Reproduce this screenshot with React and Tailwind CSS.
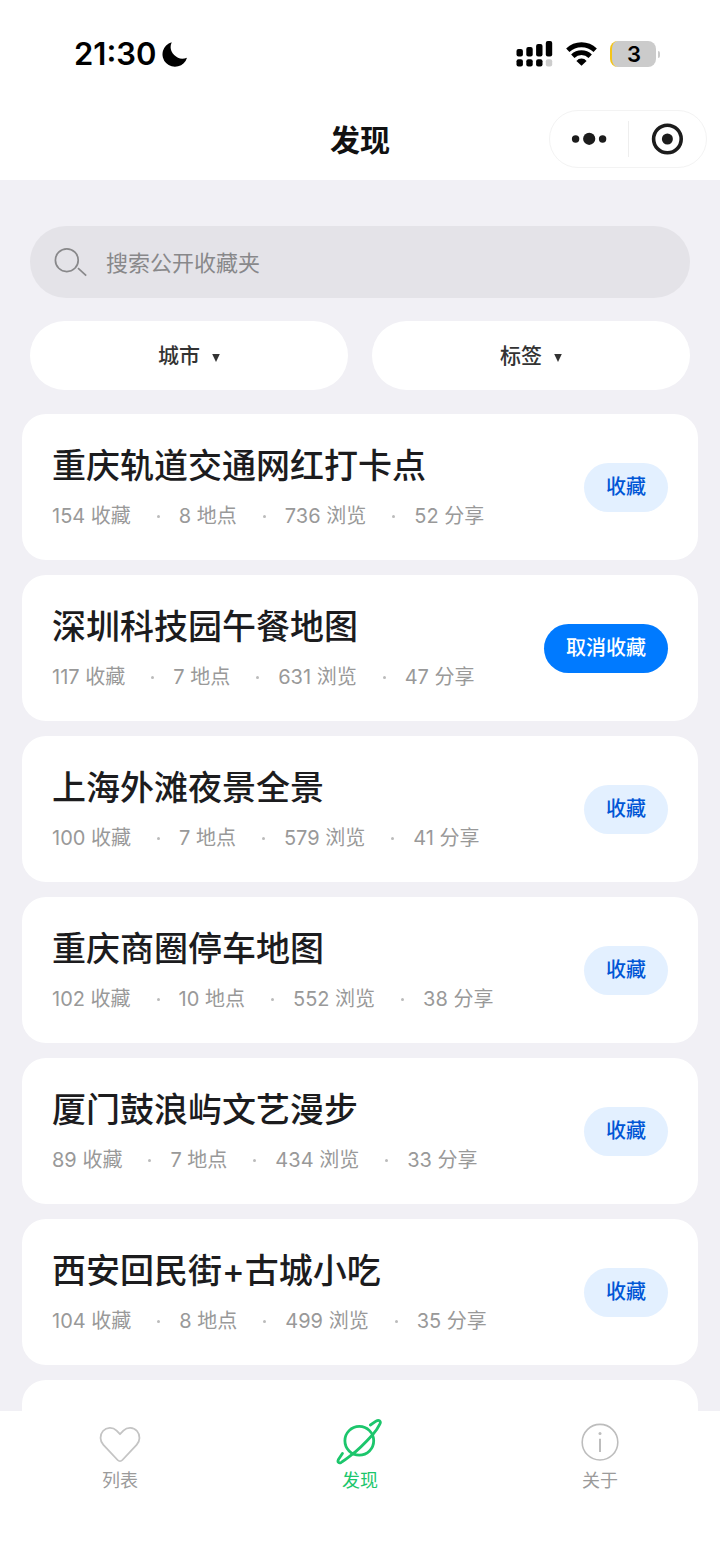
import { useState } from 'react'

const COLLECTIONS = [
  { id: 1, title: '重庆轨道交通网红打卡点', saves: 154, places: 8, views: 736, shares: 52 },
  { id: 2, title: '深圳科技园午餐地图', saves: 117, places: 7, views: 631, shares: 47 },
  { id: 3, title: '上海外滩夜景全景', saves: 100, places: 7, views: 579, shares: 41 },
  { id: 4, title: '重庆商圈停车地图', saves: 102, places: 10, views: 552, shares: 38 },
  { id: 5, title: '厦门鼓浪屿文艺漫步', saves: 89, places: 7, views: 434, shares: 33 },
  { id: 6, title: '西安回民街+古城小吃', saves: 104, places: 8, views: 499, shares: 35 },
]

export default function App() {
  const [saved, setSaved] = useState([2])

  const toggle = (id) => {
    setSaved(s => (s.includes(id) ? s.filter(x => x !== id) : [...s, id]))
  }

  return (
    <div className="h-dvh flex flex-col bg-[#f1f0f5] font-[Inter,'Noto_Sans_CJK_SC',sans-serif]">
      <header className="bg-white shrink-0">
        <StatusBar />
        <TitleBar title="发现" />
      </header>

      <main className="flex-1 min-h-0 overflow-hidden px-[22px] pt-[46px]">
        <div className="px-2">
          <label className="flex items-center h-[72px] px-6 gap-[19px] rounded-full bg-[#e4e3e8]">
            <SearchIcon />
            <input
              type="search"
              aria-label="搜索公开收藏夹"
              placeholder="搜索公开收藏夹"
              className="flex-1 min-w-0 pt-0.5 bg-transparent outline-none text-[22px] text-[#333333] placeholder:text-[#88888a]"
            />
          </label>
          <div className="grid grid-cols-2 gap-6 mt-[23px]">
            <Filter label="城市" />
            <Filter label="标签" />
          </div>
        </div>

        <ul className="flex flex-col gap-[15px] mt-6">
          {COLLECTIONS.map(c => (
            <CollectionCard key={c.id} item={c} saved={saved.includes(c.id)} onToggle={() => toggle(c.id)} />
          ))}
          <li className="h-[146px] shrink-0 rounded-3xl bg-white" />
        </ul>
      </main>

      <TabBar />
    </div>
  )
}

function StatusBar() {
  return (
    <div className="flex items-center justify-between h-[100px] pt-2 pl-[74px] pr-[60px] text-black">
      <div className="flex items-center gap-1.5">
        <span className="text-[31px] font-semibold">21:30</span>
        <svg width="25" height="25" viewBox="0 0 25 25" fill="currentColor">
          <path d="M9.7 0.2A12.5 12.5 0 1 0 25 15.7A11.8 11.8 0 0 1 9.7 0.2Z" />
        </svg>
      </div>
      <div className="flex items-center gap-[13px]">
        <svg width="37" height="26" viewBox="0 0 37 26" fill="currentColor">
          <rect x="0.5" y="8" width="6.4" height="7.4" rx="2" />
          <rect x="10.3" y="6" width="6.4" height="9.4" rx="2" />
          <rect x="20.1" y="3" width="6.4" height="12.4" rx="2" />
          <rect x="29.8" y="0" width="6.4" height="15.4" rx="2" />
          <rect x="0.5" y="18.2" width="6.4" height="7.2" rx="2" />
          <rect x="10.3" y="18.2" width="6.4" height="7.2" rx="2" />
          <rect x="20.1" y="18.2" width="6.4" height="7.2" rx="2" />
          <rect x="29.8" y="18.2" width="6.4" height="7.2" rx="2" fill="#cccccc" />
        </svg>
        <svg width="31" height="24" viewBox="0 0 31 24" fill="none" stroke="currentColor" strokeWidth="4.8">
          <path d="M1.8 8.2A20 20 0 0 1 29.2 8.2" />
          <path d="M6.8 14.2A12.6 12.6 0 0 1 24.2 14.2" />
          <path d="M15.5 23.8L10.4 18.9A6.8 6.8 0 0 1 20.6 18.9Z" fill="currentColor" stroke="none" />
        </svg>
        <div className="flex items-center gap-0.5">
          <div className="flex items-center justify-center w-[46px] h-[26px] rounded-lg border-l-2 border-[#f5c518] bg-[#cbcbcb] text-[22px] font-semibold leading-none">
            3
          </div>
          <div className="w-0.5 h-[7px] rounded-r-full bg-[#cbcbcb]" />
        </div>
      </div>
    </div>
  )
}

function TitleBar({ title }) {
  return (
    <div className="grid grid-cols-[1fr_auto_1fr] items-center h-20 px-[13px]">
      <h1 className="col-start-2 text-[30px] font-semibold text-[#111111]">{title}</h1>
      <div className="justify-self-end flex items-center w-[158px] h-[58px] mb-0.5 rounded-full border border-[#f3f3f3] text-[#1c1c1c]">
        <button aria-label="更多" className="flex-1 flex justify-center">
          <svg width="36" height="14" viewBox="0 0 36 14" fill="currentColor">
            <circle cx="4.6" cy="7" r="3.7" />
            <circle cx="18.2" cy="6.8" r="6.1" />
            <circle cx="31.6" cy="7" r="3.7" />
          </svg>
        </button>
        <div className="w-px h-9 bg-[#eeeeee]" />
        <button aria-label="关闭" className="flex-1 flex justify-center">
          <svg width="32" height="32" viewBox="0 0 32 32" fill="none" stroke="currentColor" strokeWidth="3.6">
            <circle cx="16.4" cy="16" r="13.8" />
            <circle cx="16.4" cy="16" r="5.5" fill="currentColor" stroke="none" />
          </svg>
        </button>
      </div>
    </div>
  )
}

function SearchIcon() {
  return (
    <svg width="33" height="30" viewBox="0 0 33 30" fill="none" stroke="#88888a" strokeWidth="1.7" className="shrink-0">
      <circle cx="12.8" cy="13.2" r="11.4" />
      <path d="M24 21.2L32.2 28.6" />
    </svg>
  )
}

function Filter({ label }) {
  return (
    <label className="flex items-center justify-center gap-3 h-[69px] rounded-full bg-white text-[#333333]">
      <select aria-label={label} className="appearance-none bg-transparent outline-none text-[21px] font-medium">
        <option>{label}</option>
      </select>
      <svg width="8" height="8" viewBox="0 0 8 8" fill="currentColor" className="mt-1 pointer-events-none">
        <path d="M0.2 0H7.8L4 8Z" />
      </svg>
    </label>
  )
}

function CollectionCard({ item, saved, onToggle }) {
  const stats = [`${item.saves} 收藏`, `${item.places} 地点`, `${item.views} 浏览`, `${item.shares} 分享`]

  return (
    <li className="flex items-center justify-between h-[146px] shrink-0 px-[30px] rounded-3xl bg-white">
      <div className="pb-0.5">
        <h2 className="text-[34px] leading-12 font-medium text-[#1c1c1e]">{item.title}</h2>
        <div className="flex mt-3 text-[20px] leading-7 text-[#999999]">
          {stats.map((s, i) => (
            <div key={s} className="flex items-center">
              {i > 0 && <span className="w-[3px] h-[3px] ml-[26px] mr-[19px] rounded-full bg-[#bbbbbb]" />}
              <span>{s}</span>
            </div>
          ))}
        </div>
      </div>
      <button
        onClick={onToggle}
        className={`h-[49px] px-[22px] rounded-full text-[20px] font-medium ${saved ? 'bg-[#007aff] text-white' : 'bg-[#e3f0ff] text-[#0056d6]'}`}
      >
        {saved ? '取消收藏' : '收藏'}
      </button>
    </li>
  )
}

function TabBar() {
  return (
    <nav className="grid grid-cols-3 shrink-0 h-[150px] pt-[7px] bg-white text-[18px] leading-6 text-[#9b9b9b]">
      <a href="#list" className="flex flex-col items-center gap-[3px]">
        <svg width="48" height="48" viewBox="0 0 48 48" fill="none" stroke="#c4c4c4" strokeWidth="1.8" strokeLinejoin="round">
          <path d="M24 16.2L20.6 12.6C16.6 8.8 10.6 9.1 7 13C3.6 16.8 3.7 23 7.4 26.8L21.6 42C23 43.5 25 43.5 26.4 42L40.6 26.8C44.3 23 44.4 16.8 41 13C37.4 9.1 31.4 8.8 27.4 12.6Z" />
        </svg>
        列表
      </a>
      <a href="#discover" aria-current="page" className="flex flex-col items-center gap-[3px] text-[#1cc66c]">
        <svg width="48" height="48" viewBox="0 0 48 48" fill="none" stroke="currentColor" strokeWidth="2.8" strokeLinecap="round" strokeLinejoin="round">
          <circle cx="23.3" cy="22.8" r="14.4" />
          <path d="M34.4 7L40 3.2C43 1.4 45.4 3.2 43.8 6.2C42.4 9.2 39.6 13.4 36.6 16.8C31 23 23.4 31.2 15.2 37.2C11.6 40 8 42.8 5.2 44.4C2.8 45.6 1.2 44 2.4 41.6L6.4 35.4" />
        </svg>
        发现
      </a>
      <a href="#about" className="flex flex-col items-center gap-[3px]">
        <svg width="48" height="48" viewBox="0 0 48 48" fill="none" stroke="#bdbdbd" strokeWidth="1.6">
          <circle cx="24" cy="24.2" r="17.8" />
          <path d="M24 20.8V34" strokeWidth="2" />
          <circle cx="24" cy="15.4" r="1.5" fill="#bdbdbd" stroke="none" />
        </svg>
        关于
      </a>
    </nav>
  )
}
